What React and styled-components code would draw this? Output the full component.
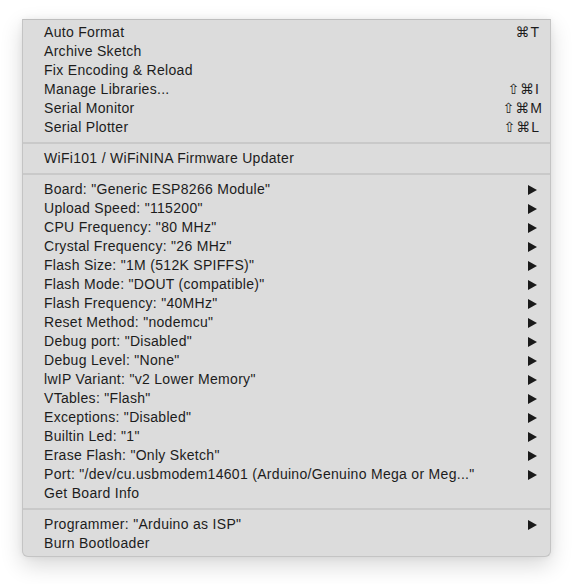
import React from "react";
import styled, { createGlobalStyle } from "styled-components";

const Global = createGlobalStyle`
  html, body { margin: 0; padding: 0; background: #ffffff; }
  body { font-family: "Liberation Sans", "DejaVu Sans", sans-serif; }
`;

const Page = styled.div`
  width: 573px;
  height: 584px;
  padding: 19px 0 0 22px;
  box-sizing: border-box;
`;

const Menu = styled.div`
  width: 529px;
  box-sizing: border-box;
  background: #dcdcdc;
  border: 1px solid #c4c4c4;
  border-top-color: #bdbdbd;
  border-radius: 0 0 6px 6px;
  box-shadow: 0 8px 22px rgba(0, 0, 0, 0.16), 0 0 6px rgba(0, 0, 0, 0.06);
  padding: 3px 0;
  display: flex;
  flex-direction: column;
`;

const Row = styled.div`
  height: 19px;
  display: flex;
  align-items: center;
  padding: 0 11px 0 21px;
  color: #1c1c1c;
  font-size: 14px;
  line-height: 19px;
  letter-spacing: 0.3px;
`;

const Label = styled.span`
  flex: 1;
  white-space: nowrap;
`;

const Shortcut = styled.span`
  font-family: "Liberation Sans", "DejaVu Sans", sans-serif;
  font-size: 14px;
  color: #1c1c1c;
  letter-spacing: 1px;
  margin-right: ${(p) => (p.$wide ? "-4px" : "-1px")};
`;

const Arrow = styled.svg`
  width: 9px;
  height: 10px;
  margin-right: 2px;
  display: block;
`;

const Separator = styled.div`
  height: 12px;
  display: flex;
  align-items: center;
  &::before {
    content: "";
    flex: 1;
    height: 2px;
    background: #c9c9c9;
  }
`;

const groups = [
  [
    { label: "Auto Format", shortcut: "⌘T" },
    { label: "Archive Sketch" },
    { label: "Fix Encoding & Reload" },
    { label: "Manage Libraries...", shortcut: "⇧⌘I" },
    { label: "Serial Monitor", shortcut: "⇧⌘M", wide: true },
    { label: "Serial Plotter", shortcut: "⇧⌘L" },
  ],
  [{ label: "WiFi101 / WiFiNINA Firmware Updater" }],
  [
    { label: 'Board: "Generic ESP8266 Module"', sub: true },
    { label: 'Upload Speed: "115200"', sub: true },
    { label: 'CPU Frequency: "80 MHz"', sub: true },
    { label: 'Crystal Frequency: "26 MHz"', sub: true },
    { label: 'Flash Size: "1M (512K SPIFFS)"', sub: true },
    { label: 'Flash Mode: "DOUT (compatible)"', sub: true },
    { label: 'Flash Frequency: "40MHz"', sub: true },
    { label: 'Reset Method: "nodemcu"', sub: true },
    { label: 'Debug port: "Disabled"', sub: true },
    { label: 'Debug Level: "None"', sub: true },
    { label: 'lwIP Variant: "v2 Lower Memory"', sub: true },
    { label: 'VTables: "Flash"', sub: true },
    { label: 'Exceptions: "Disabled"', sub: true },
    { label: 'Builtin Led: "1"', sub: true },
    { label: 'Erase Flash: "Only Sketch"', sub: true },
    {
      label: 'Port: "/dev/cu.usbmodem14601 (Arduino/Genuino Mega or Meg..."',
      sub: true,
    },
    { label: "Get Board Info" },
  ],
  [
    { label: 'Programmer: "Arduino as ISP"', sub: true },
    { label: "Burn Bootloader" },
  ],
];

function Item({ label, shortcut, sub, wide }) {
  return (
    <Row>
      <Label>{label}</Label>
      {shortcut && <Shortcut $wide={wide}>{shortcut}</Shortcut>}
      {sub && (
        <Arrow viewBox="0 0 9 10">
          <path d="M0 0 L9 5 L0 10 Z" fill="#1a1a1a" />
        </Arrow>
      )}
    </Row>
  );
}

export default function App() {
  return (
    <>
      <Global />
      <Page>
        <Menu>
          {groups.map((g, gi) => (
            <React.Fragment key={gi}>
              {gi > 0 && <Separator />}
              {g.map((it) => (
                <Item key={it.label} {...it} />
              ))}
            </React.Fragment>
          ))}
        </Menu>
      </Page>
    </>
  );
}
